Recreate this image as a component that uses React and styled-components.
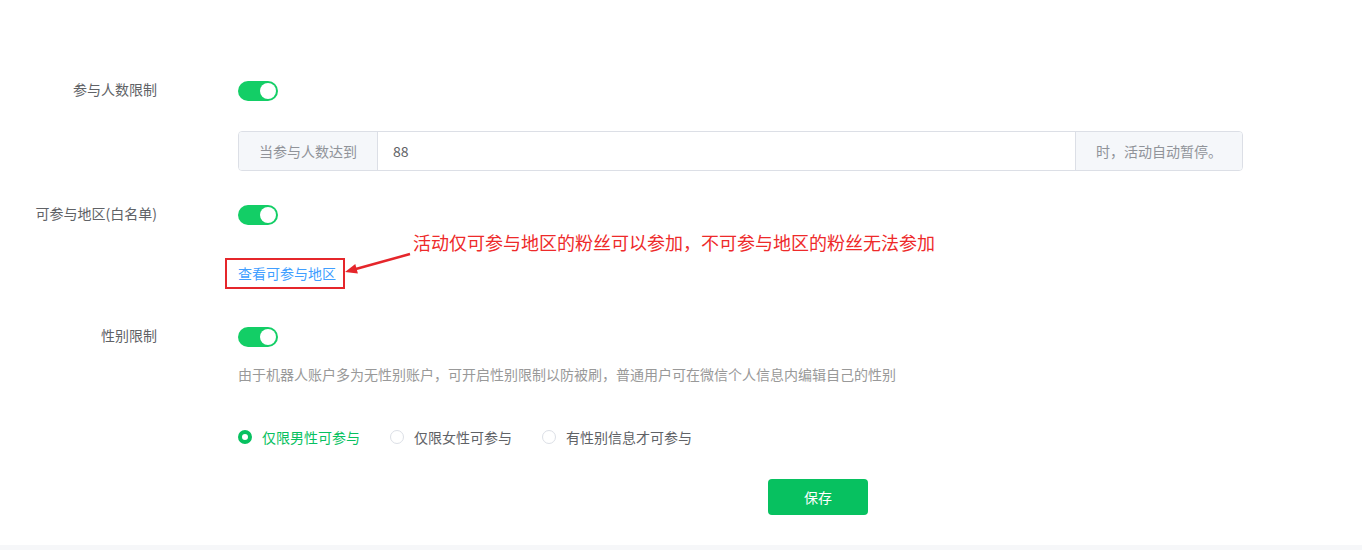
import styled, { createGlobalStyle } from 'styled-components'

const GlobalStyle = createGlobalStyle`
  body {
    margin: 0;
    background: #fff;
    font-family: "Noto Sans CJK SC", "Noto Sans", sans-serif;
    font-size: 14px;
    color: #606266;
  }
`

const Form = styled.div`
  padding-top: 81px;
  width: 1243px;
`

const Item = styled.div`
  display: flex;
  align-items: flex-start;
  margin-top: ${(props) => props.$top || 0}px;
`

const Label = styled.div`
  width: 157px;
  margin-right: 81px;
  text-align: right;
  line-height: 16px;
  font-size: 14px;
  color: #606266;
  flex-shrink: 0;
`

const Control = styled.div`
  width: 1005px;
  display: flex;
  flex-direction: column;
  align-items: flex-start;
`

const Switch = styled.span`
  position: relative;
  display: inline-block;
  width: 40px;
  height: 20px;
  border-radius: 10px;
  background: #13ce66;

  &::after {
    content: '';
    position: absolute;
    top: 2px;
    right: 2px;
    width: 16px;
    height: 16px;
    border-radius: 50%;
    background: #fff;
  }
`

const InputGroup = styled.div`
  display: flex;
  width: 100%;
  height: 40px;
  margin-top: 30px;
  border: 1px solid #dcdfe6;
  border-radius: 4px;
  box-sizing: border-box;
  overflow: hidden;
`

const Addon = styled.div`
  display: flex;
  align-items: center;
  padding: 0 20px;
  background: #f5f7fa;
  color: #909399;
  border-${(props) => (props.$side === 'left' ? 'right' : 'left')}: 1px solid #dcdfe6;
  white-space: nowrap;
`

const Input = styled.div`
  flex: 1;
  display: flex;
  align-items: center;
  padding: 0 15px;
  color: #606266;
`

const LinkRow = styled.div`
  position: relative;
  display: flex;
  align-items: center;
  height: 31px;
  margin-top: 33px;
`

const Link = styled.a`
  position: relative;
  top: -1px;
  color: #409eff;
  text-decoration: none;
  line-height: 20px;

  &::after {
    content: '';
    position: absolute;
    top: -5px;
    bottom: -6px;
    left: -13px;
    right: -9px;
    border: 2px solid #e5262b;
  }
`

const Note = styled.div`
  position: absolute;
  left: 175px;
  top: -28px;
  font-size: 18px;
  line-height: 24px;
  color: #ee2a2a;
  white-space: nowrap;
`

const Arrow = styled.svg`
  position: absolute;
  left: 102px;
  top: -10px;
`

const Hint = styled.div`
  margin-top: 17px;
  line-height: 20px;
  color: #999;
`

const RadioGroup = styled.div`
  display: flex;
  align-items: center;
  gap: 30px;
  margin-top: 43px;
`

const Radio = styled.label`
  display: flex;
  align-items: center;
  line-height: 20px;
  color: ${(props) => (props.$checked ? '#07c160' : '#606266')};

  &::before {
    content: '';
    width: 14px;
    height: 14px;
    box-sizing: border-box;
    border-radius: 50%;
    margin-right: 10px;
    background: #fff;
    border: ${(props) => (props.$checked ? '4px solid #07c160' : '1px solid #dcdfe6')};
  }
`

const SaveButton = styled.button`
  width: 100px;
  height: 36px;
  margin: 32px 0 0 530px;
  border: none;
  border-radius: 4px;
  background: #07c160;
  color: #fff;
  font-family: inherit;
  font-size: 14px;
`

const Footer = styled.div`
  height: 30px;
  margin-top: 30px;
  background: #f6f7f9;
`

const App = () => {
  return (
    <>
      <GlobalStyle />
      <Form>
        <Item>
          <Label>参与人数限制</Label>
          <Control>
            <Switch />
            <InputGroup>
              <Addon $side="left">当参与人数达到</Addon>
              <Input>88</Input>
              <Addon $side="right">时，活动自动暂停。</Addon>
            </InputGroup>
          </Control>
        </Item>
        <Item $top={34}>
          <Label>可参与地区(白名单)</Label>
          <Control>
            <Switch />
            <LinkRow>
              <Link href="#">查看可参与地区</Link>
              <Note>活动仅可参与地区的粉丝可以参加，不可参与地区的粉丝无法参加</Note>
              <Arrow width="75" height="30" viewBox="0 0 75 30">
                <line x1="70" y1="6" x2="14" y2="21.5" stroke="#e5262b" strokeWidth="2.5" />
                <polygon points="5,24 17.9,25.6 15.3,16" fill="#e5262b" />
              </Arrow>
            </LinkRow>
          </Control>
        </Item>
        <Item $top={38}>
          <Label>性别限制</Label>
          <Control>
            <Switch />
            <Hint>由于机器人账户多为无性别账户，可开启性别限制以防被刷，普通用户可在微信个人信息内编辑自己的性别</Hint>
            <RadioGroup>
              <Radio $checked>仅限男性可参与</Radio>
              <Radio>仅限女性可参与</Radio>
              <Radio>有性别信息才可参与</Radio>
            </RadioGroup>
            <SaveButton>保存</SaveButton>
          </Control>
        </Item>
      </Form>
      <Footer />
    </>
  )
}

export default App
